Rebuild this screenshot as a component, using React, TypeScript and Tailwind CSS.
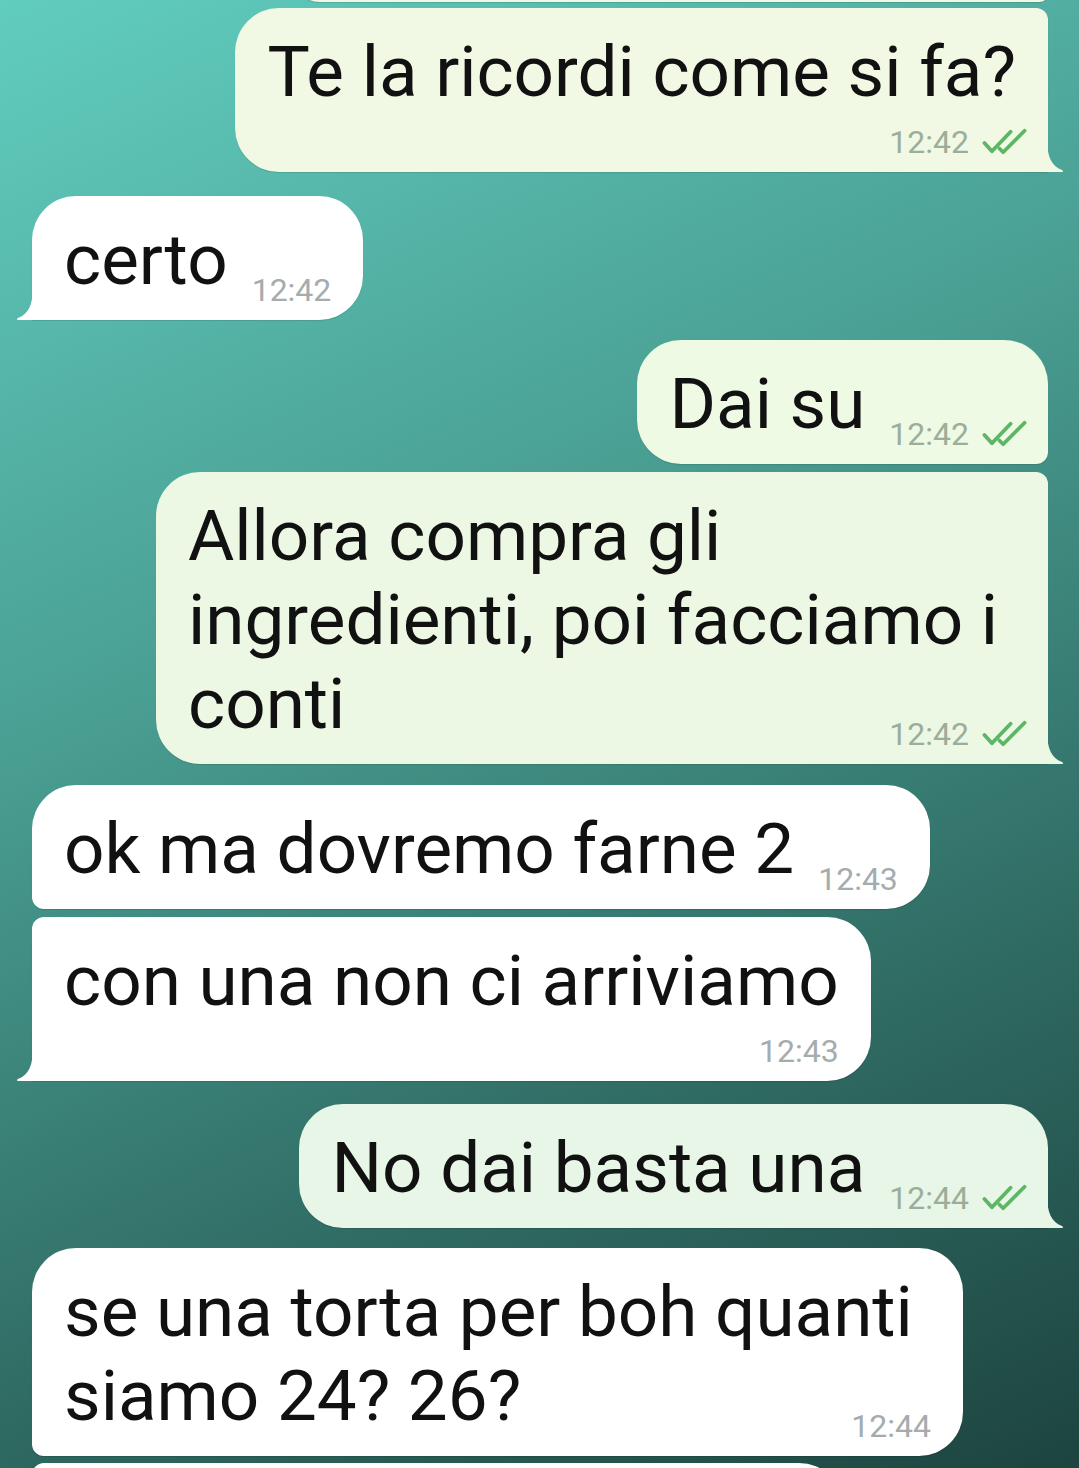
import React from "react";

type Side = "in" | "out";
type Corner = "large" | "small" | "tail";

function Check() {
    return (
        <svg width="46" height="28" viewBox="0 0 48 30" fill="none" stroke="#5db665" strokeWidth="4" strokeLinecap="round" strokeLinejoin="round">
            <path d="M2 16 L10 25 L30 4" />
            <path d="M18 22 L22 26 L45 3" />
        </svg>
    );
}

function Time({ value, side, className = "" }: { value: string; side: Side; className?: string }) {
    return (
        <div className={`flex items-center gap-[13px] translate-y-[7px] shrink-0 ${className}`}>
            <span className={side === "out" ? "text-[32px] leading-[38px] text-[#9cae9a]" : "text-[32px] leading-[38px] text-[#a4acae]"}>
                {value}
            </span>
            {side === "out" && <Check />}
        </div>
    );
}

function Tail({ side, color }: { side: Side; color: string }) {
    if (side === "in") {
        return (
            <svg className="absolute bottom-0 left-[-16px]" width="17" height="34" viewBox="0 0 17 34">
                <path d="M17 0 C17 18 13 28 2 32 Q0 33 1.5 34 L17 34 Z" fill={color} />
            </svg>
        );
    }
    return (
        <svg className="absolute bottom-0 right-[-16px]" width="17" height="34" viewBox="0 0 17 34">
            <path d="M0 0 C0 18 4 28 15 32 Q17 33 15.5 34 L0 34 Z" fill={color} />
        </svg>
    );
}

type BubbleProps = {
    side: Side;
    top: Corner;
    bottom: Corner;
    bg: string;
    bgClass: string;
    mt: string;
    width?: string;
    lines: string[];
    time: string;
    timeRow?: boolean;
};

function Bubble({ side, top, bottom, bg, bgClass, mt, width = "", lines, time, timeRow }: BubbleProps) {
    const base =
        side === "in"
            ? "self-start ml-[32px] pl-[32px] pr-[32px] rounded-tr-[44px] rounded-br-[44px]"
            : "self-end mr-[31px] pl-[32px] pr-[20px] rounded-tl-[44px] rounded-bl-[44px]";

    let topCls = "";
    let bottomCls = "";
    if (side === "in") {
        topCls = top === "small" ? "rounded-tl-[12px]" : "rounded-tl-[44px]";
        bottomCls = bottom === "tail" ? "rounded-bl-none" : bottom === "small" ? "rounded-bl-[12px]" : "rounded-bl-[44px]";
    } else {
        topCls = top === "small" ? "rounded-tr-[12px]" : "rounded-tr-[44px]";
        bottomCls = bottom === "tail" ? "rounded-br-none" : bottom === "small" ? "rounded-br-[12px]" : "rounded-br-[44px]";
    }

    const textCls = "text-[71px] leading-[84px] text-[#111111] whitespace-nowrap";
    const last = lines[lines.length - 1];
    const rest = lines.slice(0, -1);

    return (
        <div className={`relative shrink-0 pt-[22px] pb-[18px] shadow-[0_1px_1px_rgba(0,0,0,0.12)] ${bgClass} ${base} ${topCls} ${bottomCls} ${mt} ${width}`}>
            {timeRow ? (
                <>
                    {lines.map((l) => (
                        <div key={l} className={side === "out" ? `${textCls} pr-[12px]` : textCls}>
                            {l}
                        </div>
                    ))}
                    <div className="flex justify-end mt-[2px]">
                        <Time value={time} side={side} />
                    </div>
                </>
            ) : (
                <>
                    {rest.map((l) => (
                        <div key={l} className={textCls}>
                            {l}
                        </div>
                    ))}
                    <div className="flex items-end justify-between">
                        <span className={textCls}>{last}</span>
                        <Time value={time} side={side} className="ml-[24px]" />
                    </div>
                </>
            )}
            {bottom === "tail" && <Tail side={side} color={bg} />}
        </div>
    );
}

export default function App() {
    return (
        <div className="h-[1468px] w-full overflow-hidden flex flex-col font-[Roboto,sans-serif] bg-[linear-gradient(155deg,#61cdbf_0%,#4a9f93_38%,#2f6b63_72%,#1d443f_100%)]">
            {/* bolla precedente, tagliata in alto */}
            <div className="self-end shrink-0 mr-[31px] mt-[-58px] h-[60px] w-[758px] bg-[#f1f9e4] rounded-tl-[44px] rounded-bl-[44px] rounded-tr-[44px] rounded-br-[12px] shadow-[0_1px_1px_rgba(0,0,0,0.12)]" />

            <Bubble side="out" top="small" bottom="tail" bg="#f1f9e4" bgClass="bg-[#f1f9e4]" mt="mt-[6px]" lines={["Te la ricordi come si fa?"]} time="12:42" timeRow />
            <Bubble side="in" top="large" bottom="tail" bg="#ffffff" bgClass="bg-white" mt="mt-[24px]" lines={["certo"]} time="12:42" />
            <Bubble side="out" top="large" bottom="small" bg="#eefae4" bgClass="bg-[#eefae4]" mt="mt-[20px]" lines={["Dai su"]} time="12:42" />
            <Bubble
                side="out"
                top="small"
                bottom="tail"
                bg="#ecf8e4"
                bgClass="bg-[#ecf8e4]"
                mt="mt-[8px]"
                width="w-[892px]"
                lines={["Allora compra gli", "ingredienti, poi facciamo i", "conti"]}
                time="12:42"
            />
            <Bubble side="in" top="large" bottom="small" bg="#ffffff" bgClass="bg-white" mt="mt-[21px]" lines={["ok ma dovremo farne 2"]} time="12:43" />
            <Bubble side="in" top="small" bottom="tail" bg="#ffffff" bgClass="bg-white" mt="mt-[8px]" lines={["con una non ci arriviamo"]} time="12:43" timeRow />
            <Bubble side="out" top="large" bottom="tail" bg="#e7f6e6" bgClass="bg-[#e7f6e6]" mt="mt-[23px]" lines={["No dai basta una"]} time="12:44" />
            <Bubble
                side="in"
                top="large"
                bottom="small"
                bg="#ffffff"
                bgClass="bg-white"
                mt="mt-[20px]"
                width="w-[931px]"
                lines={["se una torta per boh quanti", "siamo 24? 26?"]}
                time="12:44"
            />

            {/* bolla successiva, tagliata in basso */}
            <div className="self-start ml-[32px] mt-[7px] h-[100px] w-[811px] shrink-0 bg-white rounded-tl-[12px] rounded-tr-[44px] shadow-[0_1px_1px_rgba(0,0,0,0.12)]" />
        </div>
    );
}
